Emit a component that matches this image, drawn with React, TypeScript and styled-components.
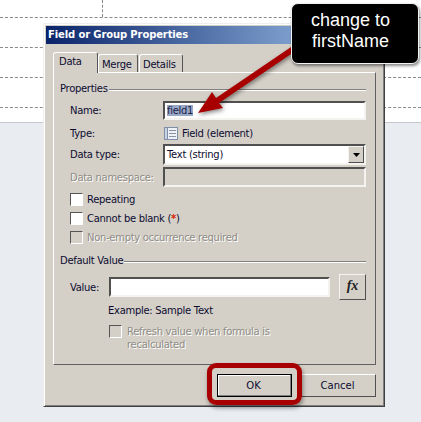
import React from "react";
import styled, { createGlobalStyle, css } from "styled-components";

const Global = createGlobalStyle`
  html, body { margin: 0; padding: 0; }
  body { width: 421px; height: 422px; overflow: hidden; background: #e9ecf1; }
  #root { width: 421px; height: 422px; }
`;

const Page = styled.div`
  position: relative;
  width: 421px;
  height: 422px;
  overflow: hidden;
  background: #e9ecf1;
`;
const Canvas = styled.div`
  height: 123px;
  box-sizing: border-box;
  background: #fff;
  border-bottom: 1px solid #c4c7cc;
  padding-top: 17px;
  display: flex;
  flex-direction: column;
  gap: 29px;
`;
const GuideLine = styled.div`
  height: 0;
  border-top: 1px dashed #8a8a8a;
`;
const GuideTick = styled.div`
  position: absolute;
  left: 102px;
  top: 0;
  height: 17px;
  border-left: 1px dashed #8a8a8a;
`;
const Dialog = styled.div`
  position: absolute;
  left: 43px;
  top: 23px;
  width: 342px;
  height: 384px;
  box-sizing: border-box;
  background: #d4d0c8;
  border: 1px solid;
  border-color: #f0efeb #404040 #404040 #f0efeb;
  box-shadow: inset 1px 1px 0 #fff, inset -1px -1px 0 #808080;
  padding: 2px 2px 0 2px;
  font-family: "DejaVu Sans", sans-serif;
  font-size: 10px;
  letter-spacing: -0.3px;
  color: #0c0c30;
  display: flex;
  flex-direction: column;
`;
const TitleBar = styled.div`
  height: 18px;
  flex: none;
  background: linear-gradient(90deg, #0a246a, #a6caf0);
  color: #fff;
  font-weight: 700;
  font-size: 10px;
  letter-spacing: -0.12px;
  line-height: 18px;
  padding-left: 2px;
`;
const Body = styled.div`
  padding: 8px 6px 0 7px;
  display: flex;
  flex-direction: column;
`;
const TabStrip = styled.div`
  display: flex;
  align-items: flex-end;
  height: 20px;
  position: relative;
  z-index: 1;
`;
const Tab = styled.div<{ $active?: boolean; $w: number }>`
  width: ${(p) => p.$w}px;
  box-sizing: border-box;
  height: ${(p) => (p.$active ? 21 : 18)}px;
  margin-bottom: ${(p) => (p.$active ? -1 : 0)}px;
  margin-right: ${(p) => (p.$active ? 0 : 1)}px;
  padding-left: ${(p) => (p.$active ? 5 : 3)}px;
  background: #d4d0c8;
  border: 1px solid #fff;
  border-right: 1.5px solid #555;
  border-bottom: none;
  border-radius: 3px 3px 0 0;
  line-height: ${(p) => (p.$active ? 18 : 19)}px;
`;
const Panel = styled.div`
  height: 293px;
  box-sizing: border-box;
  border: 1px solid;
  border-color: #fff #606060 #606060 #fff;
  padding: 8px 9px 0 6px;
  display: flex;
  flex-direction: column;
`;
const Legend = styled.div<{ $gap: number }>`
  height: 16px;
  line-height: 16px;
  margin-top: ${(p) => p.$gap}px;
  display: flex;
  align-items: center;
  gap: 1px;
  &::after {
    content: "";
    flex: 1;
    height: 1px;
    background: #808080;
    box-shadow: 0 1px 0 #fff;
  }
`;
const Row = styled.div<{ $h: number; $mt?: number }>`
  display: grid;
  grid-template-columns: 93px 203px;
  align-items: center;
  height: ${(p) => p.$h}px;
  margin-top: ${(p) => p.$mt ?? 0}px;
  padding-left: 10px;
`;
const Label = styled.div<{ $disabled?: boolean }>`
  ${(p) =>
    p.$disabled &&
    css`
      color: #8f8c85;
      text-shadow: 1px 1px 0 #fff;
    `}
  white-space: nowrap;
`;
const sunken = css`
  box-sizing: border-box;
  border: 2px solid;
  border-color: #505050 #f4f3ef #f4f3ef #505050;
`;
const NameField = styled.div`
  ${sunken}
  height: 19px;
  background: #fff;
  padding-left: 2px;
  line-height: 15px;
  display: flex;
  align-items: center;
`;
const Selected = styled.span`
  background: #9aa8c8;
  color: #1a2244;
  line-height: 11px;
  width: 26px;
`;
const TypeValue = styled.div`
  display: flex;
  align-items: center;
  gap: 4px;
  padding-left: 1px;
`;
const SelectBox = styled.div`
  ${sunken}
  height: 21px;
  background: #fff;
  padding-left: 2px;
  display: flex;
  align-items: center;
  justify-content: space-between;
`;
const SelectButton = styled.div`
  width: 16px;
  height: 17px;
  box-sizing: border-box;
  background: #d4d0c8;
  border: 1px solid;
  border-color: #f4f3ef #505050 #505050 #f4f3ef;
  display: flex;
  align-items: center;
  justify-content: center;
`;
const DisabledField = styled.div`
  ${sunken}
  height: 20px;
`;
const CheckRow = styled.div<{ $mt?: number }>`
  display: flex;
  align-items: center;
  gap: 4px;
  padding-left: 10px;
  height: 13px;
  margin-top: ${(p) => p.$mt ?? 0}px;
`;
const Box = styled.div<{ $disabled?: boolean }>`
  flex: none;
  width: 13px;
  height: 13px;
  box-sizing: border-box;
  border: 1px solid;
  border-color: #555 #fff #fff #555;
  background: ${(p) => (p.$disabled ? "#d4d0c8" : "#fff")};
`;
const Star = styled.span`
  color: #d81e00;
  font-weight: 700;
`;
const ValueRow = styled.div`
  display: flex;
  align-items: center;
  height: 26px;
  margin-top: 5px;
  padding-left: 10px;
`;
const ValueLabel = styled.div`
  width: 39px;
`;
const ValueField = styled.div`
  ${sunken}
  width: 222px;
  height: 20px;
  background: #fff;
`;
const FxButton = styled.div`
  width: 27px;
  height: 26px;
  box-sizing: border-box;
  margin-left: 9px;
  border: 1px solid;
  border-color: #f4f3ef #505050 #505050 #f4f3ef;
  font-family: "Liberation Serif", serif;
  font-style: italic;
  font-weight: 700;
  font-size: 14px;
  letter-spacing: 0;
  text-align: center;
  line-height: 22px;
  color: #222;
`;
const Example = styled.div`
  margin: 4px 0 0 48px;
  height: 13px;
  line-height: 13px;
`;
const RefreshRow = styled.div`
  display: flex;
  gap: 5px;
  margin: 8px 0 0 49px;
`;
const RefreshText = styled.div`
  line-height: 13px;
  width: 190px;
  color: #8f8c85;
  text-shadow: 1px 1px 0 #fff;
`;
const Footer = styled.div`
  display: flex;
  justify-content: flex-end;
  gap: 9px;
  padding-top: 9px;
`;
const PushButton = styled.div<{ $primary?: boolean }>`
  width: 75px;
  height: 23px;
  box-sizing: border-box;
  text-align: center;
  line-height: 22px;
  padding-right: 2px;
  letter-spacing: 0;
  border: 1px solid;
  border-color: ${(p) => (p.$primary ? "#000" : "#fff #505050 #505050 #fff")};
  box-shadow: ${(p) => (p.$primary ? "inset -1px -1px 0 #808080, inset 1px 1px 0 #fff" : "none")};
`;
const Callout = styled.div`
  position: absolute;
  left: 291px;
  top: 3px;
  width: 128px;
  height: 61px;
  box-sizing: border-box;
  background: #000;
  border: 1.5px solid #f2f2f2;
  border-radius: 7px;
  box-shadow: 1px 2px 3px rgba(0, 0, 0, 0.45);
  color: #fff;
  font-family: "Liberation Sans", sans-serif;
  font-size: 18px;
  line-height: 21px;
  text-align: center;
  padding: 6px 9px 0 0;
`;
const Highlight = styled.div`
  position: absolute;
  left: 207px;
  top: 363px;
  width: 95px;
  height: 42px;
  box-sizing: border-box;
  border: 5px solid #a80000;
  border-radius: 9px;
  box-shadow: 1px 3px 4px rgba(0, 0, 0, 0.4);
`;
const ArrowSvg = styled.svg`
  position: absolute;
  left: 190px;
  top: 40px;
  overflow: visible;
  filter: drop-shadow(1px 2px 2px rgba(0, 0, 0, 0.45));
`;

const DocIcon = () => (
  <svg width="14" height="13" viewBox="0 0 14 13">
    <rect x="0.5" y="0.5" width="13" height="12" fill="#eef1f6" stroke="#7f8fa8" />
    <rect x="0.5" y="0.5" width="3" height="12" fill="#c8d2e2" stroke="#7f8fa8" />
    <path d="M5 3.5h7M5 6.5h7M5 9.5h7" stroke="#8a94a6" />
  </svg>
);

export default function App() {
  return (
    <Page>
      <Global />
      <Canvas>
        <GuideLine />
        <GuideLine />
        <GuideLine />
        <GuideLine />
      </Canvas>
      <GuideTick />
      <Dialog>
        <TitleBar>Field or Group Properties</TitleBar>
        <Body>
          <TabStrip>
            <Tab $active $w={45}>Data</Tab>
            <Tab $w={40}>Merge</Tab>
            <Tab $w={44}>Details</Tab>
          </TabStrip>
          <Panel>
            <Legend $gap={0}>Properties</Legend>
            <Row $h={21} $mt={3}>
              <Label>Name:</Label>
              <NameField><Selected>field1</Selected></NameField>
            </Row>
            <Row $h={20} $mt={2}>
              <Label>Type:</Label>
              <TypeValue><DocIcon />Field (element)</TypeValue>
            </Row>
            <Row $h={21} $mt={1}>
              <Label>Data type:</Label>
              <SelectBox>
                Text (string)
                <SelectButton>
                  <svg width="7" height="4" viewBox="0 0 7 4"><path d="M0 0h7L3.5 4z" fill="#000" /></svg>
                </SelectButton>
              </SelectBox>
            </Row>
            <Row $h={20} $mt={2}>
              <Label $disabled>Data namespace:</Label>
              <DisabledField />
            </Row>
            <CheckRow $mt={6}><Box />Repeating</CheckRow>
            <CheckRow $mt={6}><Box /><span>Cannot be blank (<Star>*</Star>)</span></CheckRow>
            <CheckRow $mt={6}><Box $disabled /><Label $disabled>Non-empty occurrence required</Label></CheckRow>
            <Legend $gap={9}>Default Value</Legend>
            <ValueRow>
              <ValueLabel>Value:</ValueLabel>
              <ValueField />
              <FxButton>fx</FxButton>
            </ValueRow>
            <Example>Example: Sample Text</Example>
            <RefreshRow>
              <Box $disabled />
              <RefreshText>Refresh value when formula is recalculated</RefreshText>
            </RefreshRow>
          </Panel>
          <Footer>
            <PushButton $primary>OK</PushButton>
            <PushButton>Cancel</PushButton>
          </Footer>
        </Body>
      </Dialog>
      <ArrowSvg width="110" height="80" viewBox="0 0 110 80">
        <path d="M8 73 L22 52 L26 58 L104 5 L104 12 L29 63 L33 68 Z" fill="#a80000" />
      </ArrowSvg>
      <Callout>change to<br />firstName</Callout>
      <Highlight />
    </Page>
  );
}
